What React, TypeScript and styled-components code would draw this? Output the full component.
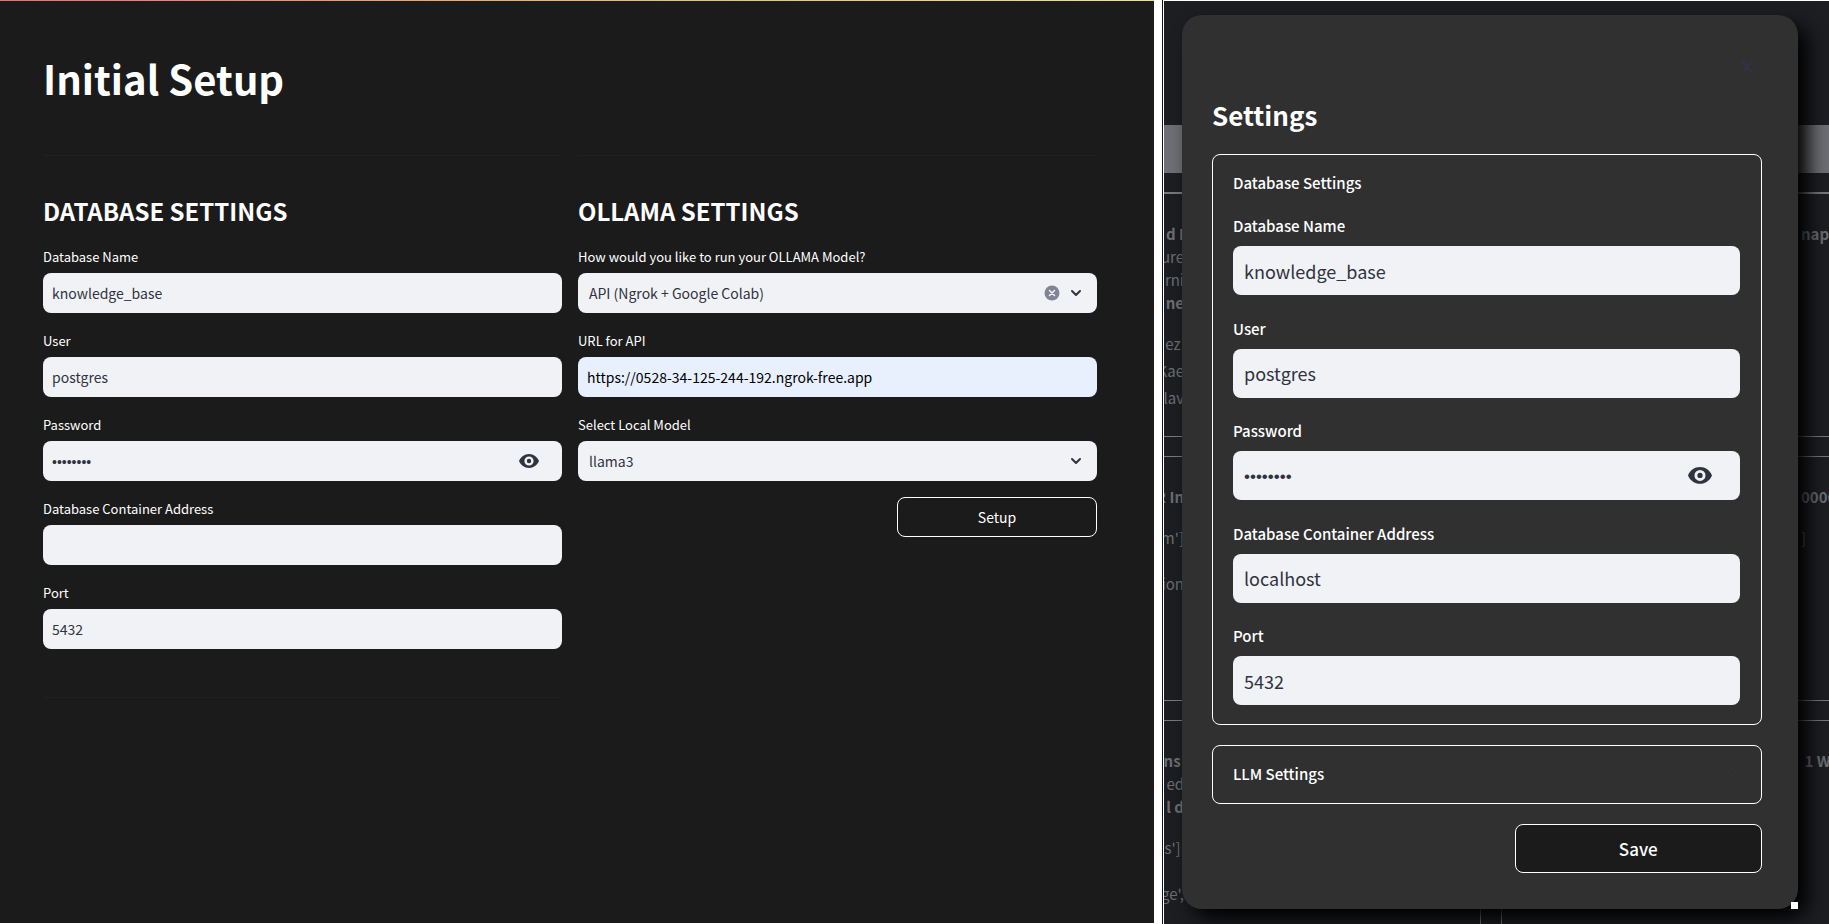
import React, { useId, useState } from "react";
import styled, { createGlobalStyle, css } from "styled-components";

const Global = createGlobalStyle`
  *, *::before, *::after { box-sizing: border-box; }
  html, body, #root { height: 100%; }
  body { margin: 0; background: #fff; }
  body, input, select, button {
    font-family: "Noto Sans CJK SC", "Noto Sans", sans-serif;
  }
`;

type Size = "md" | "lg";

const Page = styled.div`
  display: grid;
  grid-template-columns: 1154fr 10px 665fr;
  min-height: 100%;
`;

const SetupPanel = styled.main`
  padding: 0 57px 0 43px;
  background: #1b1b1b;
  border-top: 1px solid;
  border-image: linear-gradient(to right, #c98078, #dcb48c 45%, #eadfa8) 1;
  margin-bottom: 1px;
`;

const Divider = styled.div`
  background: #fff;
  border-right: 1px solid #fff;
  box-shadow: inset -1px 0 #111;
`;

const Title = styled.h1`
  margin: 0;
  padding-top: 45px;
  font-size: 40px;
  line-height: 64px;
  font-weight: 700;
  color: #fff;
`;

const Columns = styled.div`
  display: grid;
  grid-template-columns: 1fr 1fr;
  gap: 16px;
  padding-top: 45px;
`;

const Column = styled.section`
  display: flex;
  flex-direction: column;
  gap: 16px;
`;

const Rule = styled.hr`
  width: 100%;
  height: 1px;
  margin: 0;
  border: 0;
  background: #212121;
`;

const Heading = styled.h2`
  margin: 21px 0 0;
  font-size: 24px;
  line-height: 36px;
  font-weight: 700;
  text-transform: uppercase;
  color: #fff;
`;

const Footer = styled.div`
  padding-top: 32px;
`;

const Field = styled.div`
  display: flex;
  flex-direction: column;
`;

const Label = styled.label<{ $size: Size }>`
  color: #fff;
  ${(p) =>
    p.$size === "lg"
      ? css`font-size: 15px; line-height: 24px; padding-bottom: 8px; font-weight: 500;`
      : css`font-size: 13px; line-height: 24px; padding-bottom: 4px; font-weight: 400;`}
`;

const Control = styled.div<{ $size: Size }>`
  position: relative;
  display: flex;
  height: ${(p) => (p.$size === "lg" ? 49 : 40)}px;
`;

const controlBox = css<{ $size: Size }>`
  width: 100%;
  border: 0;
  outline: 0;
  border-radius: 8px;
  background: #f0f2f6;
  color: #31333f;
  font-weight: 400;
  font-size: ${(p) => (p.$size === "lg" ? 18 : 14)}px;
`;

const TextInput = styled.input<{ $size: Size; $filled?: boolean }>`
  ${controlBox}
  padding: 0 ${(p) => (p.$size === "lg" ? 11 : 9)}px;
  ${(p) => p.$filled && css`background: #e8f0fe; color: #000;`}

  &[type="password"] {
    font-family: "Liberation Sans", sans-serif;
    font-size: ${(p) => (p.$size === "lg" ? 17 : 14)}px;
    padding-top: 2px;
  }
`;

const SelectBox = styled.select<{ $size: Size }>`
  ${controlBox}
  appearance: none;
  padding: 0 56px 0 11px;
`;

const Adornments = styled.div`
  position: absolute;
  top: 0;
  bottom: 0;
  right: 13px;
  display: flex;
  align-items: center;
  gap: 8px;
  color: #31333f;
  pointer-events: none;
`;

const IconButton = styled.button`
  display: flex;
  padding: 0;
  border: 0;
  background: none;
  color: inherit;
  pointer-events: auto;
  cursor: pointer;
`;

const EyeSlot = styled(Adornments)<{ $size: Size }>`
  right: ${(p) => (p.$size === "lg" ? 28 : 23)}px;
`;

const OutlineButton = styled.button<{ $size: Size }>`
  align-self: flex-end;
  flex: none;
  width: ${(p) => (p.$size === "lg" ? "45%" : "200px")};
  height: ${(p) => (p.$size === "lg" ? 49 : 40)}px;
  border: 1px solid #fff;
  border-radius: 8px;
  background: #1b1b1b;
  color: #fff;
  font-size: ${(p) => (p.$size === "lg" ? 17 : 14)}px;
  font-weight: ${(p) => (p.$size === "lg" ? 500 : 400)};
  cursor: pointer;
`;

const AppPanel = styled.div`
  position: relative;
  overflow: hidden;
  display: flex;
  margin-top: 1px;
  padding: 14px 31px 15px 18px;
  background: #1c1e22;
`;

/* Results page that stays behind the open dialog. */
const Backdrop = styled.div`
  position: absolute;
  inset: 0;
  padding-top: 124px;
  color: #6c6e72;
`;

const SearchBar = styled.div`
  height: 48px;
  background: #6d6f74;
`;

const Results = styled.div`
  display: grid;
  grid-template-columns: 317fr 328fr;
  column-gap: 20px;
  row-gap: 19px;
  margin-top: 19px;
  border-top: 2px solid #77797d;
`;

const Card = styled.div<{ $side: "left" | "right"; $first?: boolean }>`
  height: ${(p) => (p.$first ? 243 : 245)}px;
  padding-top: 28px;
  overflow: hidden;
  border: 1px solid #77797d;
  border-top-width: ${(p) => (p.$first ? 0 : 1)}px;
  border-left-width: ${(p) => (p.$side === "left" ? 0 : 1)}px;
  border-right-width: ${(p) => (p.$side === "left" ? 1 : 0)}px;
  display: flex;
  flex-direction: column;
  align-items: ${(p) => (p.$side === "left" ? "flex-start" : "flex-end")};
`;

const Snippet = styled.div<{ $bold?: boolean; $gap?: number }>`
  display: flex;
  justify-content: flex-end;
  width: 20px;
  white-space: pre;
  font-size: 15px;
  line-height: 23px;
  margin-top: ${(p) => p.$gap ?? 0}px;
  font-weight: ${(p) => (p.$bold ? 700 : 400)};
`;

const EndSnippet = styled(Snippet)`
  width: 28px;
  justify-content: flex-start;
`;

const Dialog = styled.div`
  position: relative;
  flex: 1;
  display: flex;
  flex-direction: column;
  padding: 41px 36px 36px 30px;
  border-radius: 20px;
  background: #303030;
  box-shadow: 10px 10px 20px #000;
`;

const CloseButton = styled(IconButton)`
  align-self: flex-end;
  margin-right: 4px;
  padding: 4px;
  color: #31314a;
`;

const DialogTitle = styled.h2`
  margin: 17px 0 19px;
  font-size: 26px;
  line-height: 40px;
  font-weight: 700;
  color: #fff;
`;

const Expander = styled.section<{ $grow?: boolean }>`
  display: flex;
  flex-direction: column;
  flex: ${(p) => (p.$grow ? "1" : "none")};
  margin-bottom: 20px;
  padding: 0 21px ${(p) => (p.$grow ? 19 : 17)}px 20px;
  border: 1px solid #fff;
  border-radius: 8px;
`;

const ExpanderHead = styled.button`
  display: flex;
  align-items: center;
  justify-content: space-between;
  padding: 16px 0 0;
  border: 0;
  background: none;
  color: #fff;
  font-size: 15px;
  line-height: 24px;
  font-weight: 500;
  text-align: left;
  cursor: pointer;
  svg { color: #31313a; }
`;

const FieldStack = styled.div`
  flex: 1;
  display: flex;
  flex-direction: column;
  justify-content: space-between;
  padding-top: 19px;
`;

const ResizeHandle = styled.span`
  position: absolute;
  right: 0;
  bottom: 0;
  width: 7px;
  height: 7px;
  background: #fff;
`;

const EyeIcon = ({ width = 20 }: { width?: number }) => (
  <svg width={width} height={width * 0.7} viewBox="0 0 20 14" fill="currentColor" aria-hidden="true">
    <path
      fillRule="evenodd"
      d="M10 0C5.500 0 1.700 2.900 0 7c1.700 4.100 5.500 7 10 7s8.300-2.900 10-7c-1.700-4.100-5.500-7-10-7Zm0 11.600A4.600 4.600 0 1 1 10 2.400a4.600 4.600 0 0 1 0 9.200ZM10 4.800a2.200 2.200 0 1 0 0 4.400 2.200 2.200 0 0 0 0-4.400Z"
    />
  </svg>
);

const ChevronIcon = () => (
  <svg width="16" height="16" viewBox="0 0 16 16" fill="none" stroke="currentColor" strokeWidth="2" strokeLinecap="round" strokeLinejoin="round" aria-hidden="true">
    <path d="m4 6 4 4 4-4" />
  </svg>
);

const ClearIcon = () => (
  <svg width="16" height="16" viewBox="0 0 16 16" aria-hidden="true">
    <circle cx="8" cy="8" r="7.500" fill="#808495" />
    <path d="m5.500 5.500 5 5m0-5-5 5" stroke="#f0f2f6" strokeWidth="1.500" strokeLinecap="round" />
  </svg>
);

const CrossIcon = () => (
  <svg width="14" height="14" viewBox="0 0 14 14" fill="none" stroke="currentColor" strokeWidth="2" aria-hidden="true">
    <path d="m2 1 10 12m0-12-10 12" />
  </svg>
);

interface TextFieldProps {
  label: string;
  initial?: string;
  size?: Size;
  filled?: boolean;
}

function TextField({ label, initial = "", size = "md", filled }: TextFieldProps) {
  const id = useId();
  const [value, setValue] = useState(initial);
  return (
    <Field>
      <Label htmlFor={id} $size={size}>{label}</Label>
      <Control $size={size}>
        <TextInput id={id} $size={size} $filled={filled} value={value} onChange={(e) => setValue(e.target.value)} />
      </Control>
    </Field>
  );
}

function PasswordField({ size = "md" }: { size?: Size }) {
  const id = useId();
  const [value, setValue] = useState("postgres");
  const [shown, setShown] = useState(false);
  return (
    <Field>
      <Label htmlFor={id} $size={size}>Password</Label>
      <Control $size={size}>
        <TextInput id={id} $size={size} type={shown ? "text" : "password"} value={value} onChange={(e) => setValue(e.target.value)} />
        <EyeSlot $size={size}>
          <IconButton type="button" aria-label="Show password" onClick={() => setShown(!shown)}>
            <EyeIcon width={size === "lg" ? 24 : 20} />
          </IconButton>
        </EyeSlot>
      </Control>
    </Field>
  );
}

function SelectField({ label, option, clearable }: { label: string; option: string; clearable?: boolean }) {
  const id = useId();
  return (
    <Field>
      <Label htmlFor={id} $size="md">{label}</Label>
      <Control $size="md">
        <SelectBox id={id} $size="md" defaultValue={option}>
          <option>{option}</option>
        </SelectBox>
        <Adornments>
          {clearable && <IconButton type="button" aria-label="Clear value"><ClearIcon /></IconButton>}
          <ChevronIcon />
        </Adornments>
      </Control>
    </Field>
  );
}

const Behind = () => (
  <Backdrop aria-hidden="true">
    <SearchBar />
    <Results>
      <Card $side="left" $first>
        <Snippet $bold>{"d I"}</Snippet>
        <Snippet>ure</Snippet>
        <Snippet>rni</Snippet>
        <Snippet $bold>ne</Snippet>
        <Snippet $gap={18}>{"ez "}</Snippet>
        <Snippet $gap={4}>Kae</Snippet>
        <Snippet $gap={4}>lav</Snippet>
      </Card>
      <Card $side="right" $first>
        <EndSnippet $bold>nap</EndSnippet>
      </Card>
      <Card $side="left">
        <Snippet $bold>R In</Snippet>
        <Snippet $gap={18}>m']</Snippet>
        <Snippet $gap={23}>ion</Snippet>
      </Card>
      <Card $side="right">
        <EndSnippet $bold>0000</EndSnippet>
        <EndSnippet $gap={18}>]</EndSnippet>
      </Card>
      <Card $side="left">
        <Snippet $bold>{"ns "}</Snippet>
        <Snippet>ed</Snippet>
        <Snippet $bold>l d</Snippet>
        <Snippet $gap={18}>{"s'] "}</Snippet>
        <Snippet $gap={23}>ge',</Snippet>
      </Card>
      <Card $side="right">
        <EndSnippet $bold>{" 1 W"}</EndSnippet>
      </Card>
    </Results>
  </Backdrop>
);

export default function App() {
  return (
    <>
      <Global />
      <Page>
        <SetupPanel>
          <Title>Initial Setup</Title>
          <Columns>
            <Column>
              <Rule />
              <Heading>Database Settings</Heading>
              <TextField label="Database Name" initial="knowledge_base" />
              <TextField label="User" initial="postgres" />
              <PasswordField />
              <TextField label="Database Container Address" />
              <TextField label="Port" initial="5432" />
              <Footer><Rule /></Footer>
            </Column>
            <Column>
              <Rule />
              <Heading>Ollama Settings</Heading>
              <SelectField label="How would you like to run your OLLAMA Model?" option="API (Ngrok + Google Colab)" clearable />
              <TextField label="URL for API" initial="https://0528-34-125-244-192.ngrok-free.app" filled />
              <SelectField label="Select Local Model" option="llama3" />
              <OutlineButton type="button" $size="md">Setup</OutlineButton>
            </Column>
          </Columns>
        </SetupPanel>
        <Divider />
        <AppPanel>
          <Behind />
          <Dialog role="dialog" aria-label="Settings">
            <CloseButton type="button" aria-label="Close"><CrossIcon /></CloseButton>
            <DialogTitle>Settings</DialogTitle>
            <Expander $grow>
              <ExpanderHead type="button">Database Settings<ChevronIcon /></ExpanderHead>
              <FieldStack>
                <TextField size="lg" label="Database Name" initial="knowledge_base" />
                <TextField size="lg" label="User" initial="postgres" />
                <PasswordField size="lg" />
                <TextField size="lg" label="Database Container Address" initial="localhost" />
                <TextField size="lg" label="Port" initial="5432" />
              </FieldStack>
            </Expander>
            <Expander>
              <ExpanderHead type="button">LLM Settings<ChevronIcon /></ExpanderHead>
            </Expander>
            <OutlineButton type="button" $size="lg">Save</OutlineButton>
            <ResizeHandle />
          </Dialog>
        </AppPanel>
      </Page>
    </>
  );
}
